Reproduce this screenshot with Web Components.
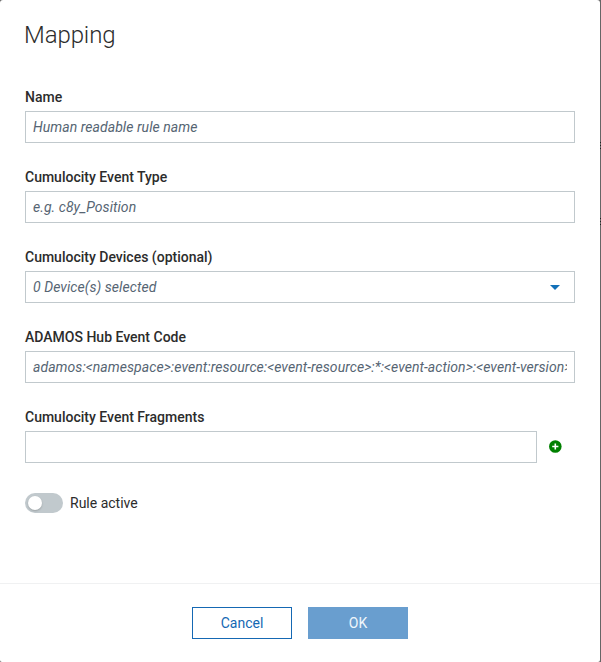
<!DOCTYPE html>
<html lang="en"><head><meta charset="utf-8"><title>Mapping</title>
<style>
html,body{margin:0;height:100%;overflow:hidden;background:repeating-linear-gradient(#222 0 1px,#666 1px 3px) 600px 142px/1px 8px no-repeat,repeating-linear-gradient(#222 0 1px,#666 1px 3px) 600px 218px/1px 8px no-repeat,#666}
body{font-family:Roboto,"Liberation Sans",sans-serif;font-size:14px;line-height:20px;color:#2c2c2c}
</style></head><body>
<mapping-dialog></mapping-dialog>
<script>
class Base extends HTMLElement{
  constructor(){super();this.attachShadow({mode:'open'}).innerHTML=this.view();}
  attr(n){return this.getAttribute(n)||'';}
}
customElements.define('form-field',class extends Base{
  view(){return `<style>:host{display:block;height:80px}
  .label{font-weight:500;height:20px;line-height:20px;padding-bottom:4px}
  .row{display:flex;align-items:center}</style>
  <div class="label">${this.attr('label')}</div><div class="row"><slot></slot></div>`;}
});
customElements.define('text-box',class extends Base{
  view(){return `<style>:host{display:flex;align-items:center;flex:1;min-width:0;height:32px;box-sizing:border-box;border:1px solid #c1c9cd;padding:0 7px;background:#fff;color:#566573;font-style:italic;letter-spacing:.057px}
  .clip{flex:1;overflow:hidden;white-space:nowrap}</style><div class="clip"><slot></slot></div><slot name="end"></slot>`;}
});
customElements.define('caret-icon',class extends Base{
  view(){return `<style>:host{display:block;width:10px;height:5px;margin:1px 7px 0 0}svg{display:block}</style>
  <svg width="10" height="5"><path d="M0 0h10L5 5z" fill="#1270b8"/></svg>`;}
});
customElements.define('add-button',class extends Base{
  view(){return `<style>:host{display:block;width:13px;height:13px;margin:0 13px 1px 12px}svg{display:block}</style>
  <svg width="13" height="13" viewBox="0 0 13 13"><circle cx="6.3" cy="6.5" r="6.3" fill="#008000"/><path d="M6.3 3.4v6.2M3.2 6.5h6.2" stroke="#fff" stroke-width="1.6"/></svg>`;}
});
customElements.define('toggle-switch',class extends Base{
  view(){return `<style>:host{display:flex;align-items:center;gap:7px;height:20px}
  .track{width:38px;height:20px;border-radius:10px;background:#c1c9cd;box-sizing:border-box;padding:3px}
  .knob{width:14px;height:14px;border-radius:50%;background:#fff;box-shadow:0 1px 2px rgba(0,0,0,.2)}</style><div class="track"><div class="knob"></div></div><span><slot></slot></span>`;}
});
customElements.define('action-button',class extends Base{
  view(){return `<style>:host{display:block;box-sizing:border-box;width:100px;height:32px;line-height:30px;text-align:center;border:1px solid #1568b3;color:#1568b3}
  :host([primary]){background:#699ecf;border-color:#699ecf;color:#f0f6fb}</style><slot></slot>`;}
});
customElements.define('mapping-dialog',class extends Base{
  view(){return `<style>:host{display:flex;flex-direction:column;box-sizing:border-box;width:600px;height:662px;background:#fff;border-radius:3px 3px 2px 2px}
  h1{margin:0;padding:19px 24px 0;font-size:24px;line-height:32px;font-weight:300;height:36px;letter-spacing:-.1px}
  main{padding:32px 25px 0;flex:1}
  toggle-switch{margin-top:6px}
  footer{height:78px;border-top:1px solid #f0f1f2;display:flex;justify-content:center;align-items:center;gap:16px}</style>
  <h1>Mapping</h1><main>
  <form-field label="Name"><text-box>Human readable rule name</text-box></form-field>
  <form-field label="Cumulocity Event Type"><text-box>e.g. c8y_Position</text-box></form-field>
  <form-field label="Cumulocity Devices (optional)"><text-box>0 Device(s) selected<caret-icon slot="end"></caret-icon></text-box></form-field>
  <form-field label="ADAMOS Hub Event Code"><text-box>adamos:&lt;namespace&gt;:event:resource:&lt;event-resource&gt;:*:&lt;event-action&gt;:&lt;event-version&gt;</text-box></form-field>
  <form-field label="Cumulocity Event Fragments"><text-box></text-box><add-button></add-button></form-field>
  <toggle-switch>Rule active</toggle-switch></main>
  <footer><action-button>Cancel</action-button><action-button primary>OK</action-button></footer>`;}
});
</script></body></html>
